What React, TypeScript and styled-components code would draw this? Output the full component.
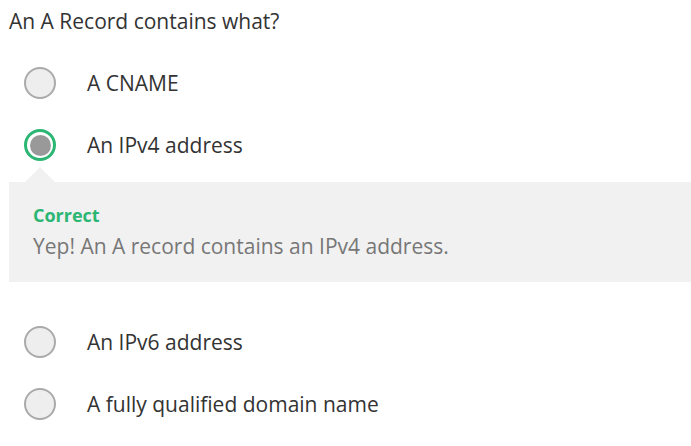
import React from "react";
import styled, { createGlobalStyle } from "styled-components";

const Global = createGlobalStyle`
  html, body { margin: 0; padding: 0; background: #fff; }
  body { font-family: "Open Sans", "Noto Sans", sans-serif; color: #333; overflow: hidden; }
`;

const Page = styled.div`
  padding: 7px 0 0 9px;
`;

const Question = styled.div`
  font-size: 21px;
  line-height: 28px;
  color: #333;
  margin-bottom: 17px;
`;

const Row = styled.div`
  display: flex;
  align-items: center;
  height: 62px;
  padding-left: 15px;
`;

const Radio = styled.span<{ $selected?: boolean }>`
  box-sizing: border-box;
  width: 32px;
  height: 32px;
  border-radius: 50%;
  flex: none;
  display: flex;
  align-items: center;
  justify-content: center;
  background: #eee;
  border: 2px solid #aaa;
  ${(p) =>
    p.$selected &&
    `
    background: #fff;
    border: 3px solid #2bb673;
  `}
`;

const Dot = styled.span`
  width: 21px;
  height: 21px;
  border-radius: 50%;
  background: #999;
`;

const Label = styled.span`
  margin-left: 31px;
  font-size: 21px;
  line-height: 28px;
  color: #333;
`;

const Feedback = styled.div`
  position: relative;
  margin-top: 6px;
  margin-bottom: 29px;
  box-sizing: border-box;
  height: 100px;
  background: #f1f1f1;
  padding: 20px 24px 0;

  &::before {
    content: "";
    position: absolute;
    left: 16px;
    top: -15px;
    border-left: 15px solid transparent;
    border-right: 15px solid transparent;
    border-bottom: 15px solid #f1f1f1;
  }
`;

const FeedbackTitle = styled.div`
  font-size: 18px;
  line-height: 26px;
  font-weight: 700;
  color: #2bb673;
`;

const FeedbackText = styled.div`
  margin-top: 2px;
  font-size: 21px;
  line-height: 32px;
  color: #777;
`;

const options = [
  { label: "A CNAME" },
  { label: "An IPv4 address", selected: true, feedback: { title: "Correct", text: "Yep! An A record contains an IPv4 address." } },
  { label: "An IPv6 address" },
  { label: "A fully qualified domain name" },
];

export default function App() {
  return (
    <Page>
      <Global />
      <Question>An A Record contains what?</Question>
      {options.map((o) => (
        <React.Fragment key={o.label}>
          <Row>
            <Radio $selected={o.selected}>{o.selected && <Dot />}</Radio>
            <Label>{o.label}</Label>
          </Row>
          {o.feedback && (
            <Feedback>
              <FeedbackTitle>{o.feedback.title}</FeedbackTitle>
              <FeedbackText>{o.feedback.text}</FeedbackText>
            </Feedback>
          )}
        </React.Fragment>
      ))}
    </Page>
  );
}
